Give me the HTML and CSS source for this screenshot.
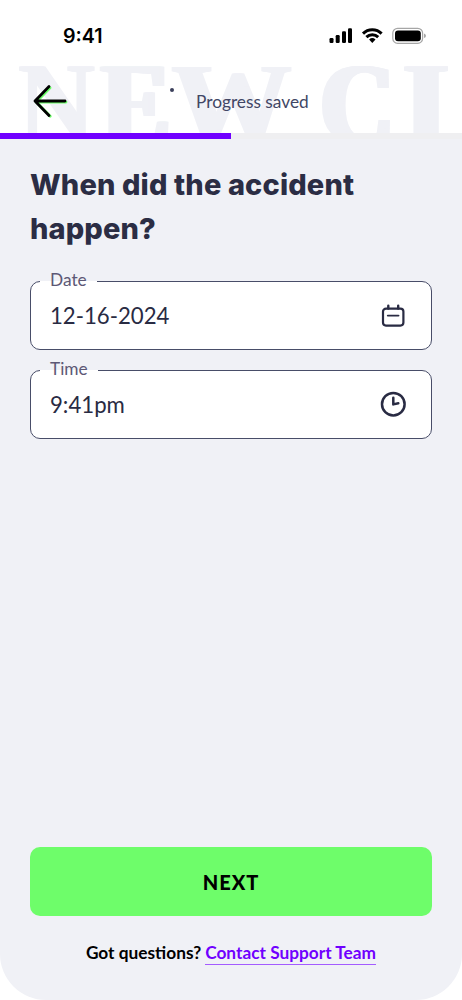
FILE: index.html
```html
<!DOCTYPE html>
<html lang="en">
<head>
<meta charset="utf-8">
<title>New Claim</title>
<link rel="stylesheet" href="styles.css">
</head>
<body>
<main class="screen">
  <div class="status">
    <span class="clock">9:41</span>
    <svg class="indicators" width="98" height="18" viewBox="0 0 98 18">
      <rect x="0.5" y="11" width="4" height="5" rx="1.2"/><rect x="6.7" y="8" width="4" height="8" rx="1.2"/><rect x="13" y="4.2" width="4" height="11.8" rx="1.2"/><rect x="19" y="1.3" width="4" height="14.7" rx="1.2"/>
      <g fill="none" stroke="#000" stroke-width="3"><path d="M34 6.6A13.2 13.2 0 0 1 52.6 6.6"/><path d="M37.4 10.2A8.5 8.5 0 0 1 49.2 10.2"/></g>
      <path d="M40.1 12.6A4.7 4.7 0 0 1 46.5 12.6L43.3 16Z"/>
      <rect x="63.8" y="1.3" width="29.8" height="15" rx="4.8" fill="#fff" stroke="#a6a6a6" stroke-width="1.2"/>
      <rect x="66" y="3.4" width="25.8" height="10.9" rx="3"/>
      <path d="M95 6.5Q97 7.2 97 8.8Q97 10.4 95 11.1Z" fill="#a6a6a6"/>
    </svg>
  </div>
  <header class="header">
    <div class="watermark" aria-hidden="true"><span class="wm wm-n">N</span><span class="wm wm-e">E</span><span class="wm wm-w">W</span><span class="wm wm-c">C</span><span class="wm wm-l">L</span></div>
    <svg class="back" width="36" height="36" viewBox="0 0 36 36">
      <g fill="none" stroke-linecap="round" stroke-linejoin="round" stroke-width="2.8"><path stroke="#6cff69" d="M18 5.7L4.2 20L18.2 34.2M4.2 20.1H34"/><path stroke="#000" d="M17 4.6L3 19L17 33.5M3 19H33"/></g>
    </svg>
    <span class="dot"></span>
    <span class="saved">Progress saved</span>
  </header>
  <div class="progress"><div class="progress-fill"></div></div>
  <section class="content">
    <h1>When did the accident<br>happen?</h1>
    <div class="field">
      <span class="label">Date</span>
      <span class="value">12-16-2024</span>
      <svg class="icon" width="30" height="30" viewBox="0 0 30 30"><g fill="none" stroke="#292b43" stroke-linecap="round"><rect x="5" y="7.6" width="20.4" height="17" rx="3" stroke-width="2.2"/><path stroke-width="2.4" d="M10.3 4.7V7.5M20.2 4.7V7.5"/><path stroke-width="1.9" d="M9.8 14.6H20.5"/></g></svg>
    </div>
    <div class="field field-time">
      <span class="label">Time</span>
      <span class="value">9:41pm</span>
      <svg class="icon" width="30" height="30" viewBox="0 0 30 30"><g fill="none" stroke="#292b43" stroke-width="2.5"><circle cx="15.3" cy="14.2" r="11.3"/><path stroke-linecap="round" stroke-linejoin="round" d="M15.3 7.7V14.4L20.3 13.2"/></g></svg>
    </div>
  </section>
  <footer class="footer">
    <button class="next" type="button">NEXT</button>
    <p class="help"><span class="question">Got questions?</span><a href="#" class="support">Contact Support Team</a></p>
  </footer>
</main>
</body>
</html>
```
FILE: styles.css
```css
* { box-sizing: border-box; }
body { margin: 0; background: #fff; font-family: Lato, sans-serif; }
.screen { width: 462px; height: 1000px; display: flex; flex-direction: column; overflow: hidden; background: #f0f1f6; border-radius: 0 0 46px 46px; }
.status { height: 62px; flex: none; background: #fff; display: flex; justify-content: space-between; padding: 27px 35px 0 63px; }
.clock { font: 600 19.7px/19px Inter, sans-serif; letter-spacing: 0; }
.indicators { display: block; }
.header { height: 71px; flex: none; background: #fff; position: relative; display: flex; align-items: flex-start; }
/* Oversized title lettering behind the header, cut at the header's lower edge. */
.watermark { position: absolute; left: 0; top: 0; width: 448px; height: 71px; overflow: hidden; color: #f0f1f6; }
.wm { position: absolute; top: -16px; font: bold 116px/116px "Liberation Serif", serif; transform-origin: 0 0; text-shadow: 1px 0, 2px 0, 3px 0, 4px 0, 5px 0, 6px 0, 7px 0, 8px 0; }
.wm-n { left: 17px; transform: scaleX(0.91); text-shadow: 1px 0, 2px 0, 3px 0; }
.wm-e { left: 98px; transform: scaleX(0.89); }
.wm-w { left: 170px; transform: scaleX(1.02); text-shadow: 1px 0, 2px 0, 3px 0, 4px 0, 5px 0; }
.wm-c { left: 317px; transform: scaleX(0.88); }
.wm-l { left: 402px; transform: scaleX(0.98); }
.back { position: relative; margin: 20px 0 0 32px; }
.dot { position: relative; width: 4px; height: 4px; border-radius: 50%; background: #3b405b; margin: 26px 0 0 102px; }
.saved { position: relative; margin: 29px 0 0 22px; font-size: 17.3px; line-height: 22px; color: #414665; white-space: nowrap; }
.progress { height: 6px; flex: none; background: #efeff1; }
.progress-fill { width: 231px; height: 6px; background: #7000ff; }
.content { padding: 24px 30px 0; }
h1 { margin: 0; font: 800 29px/44px Inter, sans-serif; letter-spacing: 0.13px; color: #2b2d44; white-space: nowrap; }
.field { position: relative; height: 69px; margin-top: 30px; background: #fff; border: 1.4px solid #484d68; border-radius: 10px; display: flex; align-items: center; justify-content: space-between; padding: 1px 23px 0 19px; }
.field-time { margin-top: 20px; }
.label { position: absolute; left: 9px; top: -13px; padding: 0 10px; font-size: 17.3px; line-height: 22px; color: #5c5875; background: linear-gradient(#f0f1f6 0 12px, #fff 12px); }
.value { font-size: 22.2px; line-height: 28px; color: #292b43; }
.footer { margin-top: auto; padding: 0 30px 35px; }
.next { display: block; width: 402px; height: 69px; border: 0; border-radius: 10px; background: #6efd6a; color: #000; font: 900 20px/24px Lato, sans-serif; letter-spacing: 1px; padding: 1px 0 0; }
.help { margin: 25px 0 0; display: flex; justify-content: center; gap: 4px; font-weight: 700; font-size: 17.3px; line-height: 23px; white-space: nowrap; }
.support { color: #7000ff; text-decoration: none; border-bottom: 1.5px solid #a45cff; }
```
